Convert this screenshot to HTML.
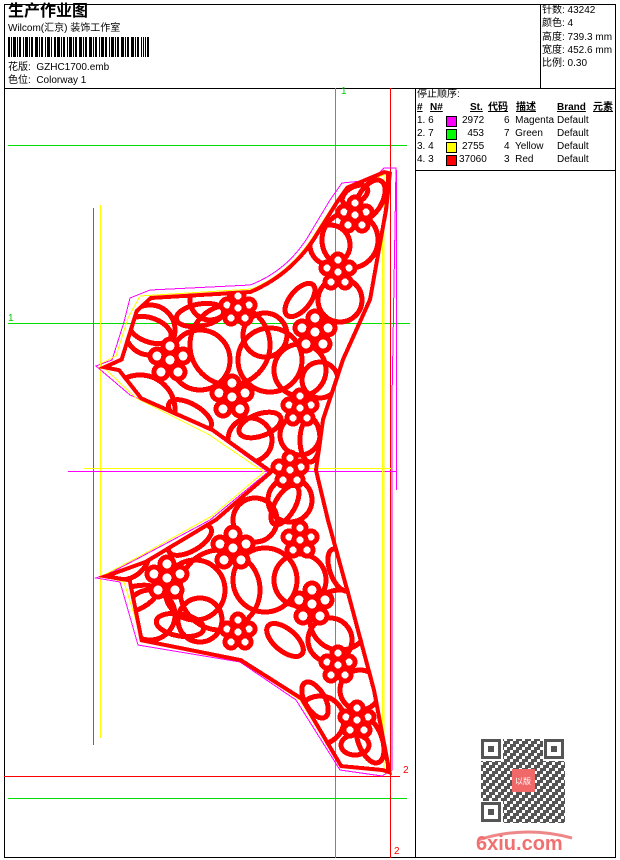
<!DOCTYPE html>
<html><head><meta charset="utf-8"><style>
body{margin:0;width:620px;height:860px;background:#fff;overflow:hidden;font-family:"Liberation Sans","Noto Sans CJK SC",sans-serif;font-size:10px;color:#000}
.t{position:absolute;white-space:nowrap;line-height:12px}
</style></head><body>
<svg width="620" height="860" style="position:absolute;left:0;top:0" shape-rendering="crispEdges">
<rect x="4.5" y="4.5" width="611" height="853" fill="none" stroke="#000"/>
<line x1="4" y1="88.5" x2="616" y2="88.5" stroke="#000"/>
<line x1="540.5" y1="4" x2="540.5" y2="88" stroke="#000"/>
<line x1="415.5" y1="88" x2="415.5" y2="858" stroke="#000"/>
<line x1="415" y1="170.5" x2="616" y2="170.5" stroke="#000"/>
<g fill="#000">
<rect x="8" y="37" width="2" height="20"/><rect x="11" y="37" width="1" height="20"/><rect x="13" y="37" width="3" height="20"/><rect x="17" y="37" width="1" height="20"/><rect x="19" y="37" width="2" height="20"/><rect x="23" y="37" width="1" height="20"/><rect x="25" y="37" width="3" height="20"/><rect x="29" y="37" width="1" height="20"/><rect x="31" y="37" width="2" height="20"/><rect x="35" y="37" width="3" height="20"/><rect x="39" y="37" width="1" height="20"/><rect x="41" y="37" width="2" height="20"/><rect x="45" y="37" width="1" height="20"/><rect x="47" y="37" width="3" height="20"/><rect x="51" y="37" width="1" height="20"/><rect x="54" y="37" width="2" height="20"/><rect x="57" y="37" width="3" height="20"/><rect x="61" y="37" width="1" height="20"/><rect x="63" y="37" width="2" height="20"/><rect x="67" y="37" width="1" height="20"/><rect x="69" y="37" width="3" height="20"/><rect x="73" y="37" width="1" height="20"/><rect x="75" y="37" width="2" height="20"/><rect x="79" y="37" width="3" height="20"/><rect x="83" y="37" width="1" height="20"/><rect x="85" y="37" width="2" height="20"/><rect x="89" y="37" width="3" height="20"/><rect x="93" y="37" width="1" height="20"/><rect x="95" y="37" width="2" height="20"/><rect x="99" y="37" width="1" height="20"/><rect x="101" y="37" width="3" height="20"/><rect x="105" y="37" width="2" height="20"/><rect x="109" y="37" width="1" height="20"/><rect x="111" y="37" width="3" height="20"/><rect x="115" y="37" width="1" height="20"/><rect x="117" y="37" width="2" height="20"/><rect x="121" y="37" width="3" height="20"/><rect x="125" y="37" width="1" height="20"/><rect x="127" y="37" width="2" height="20"/><rect x="131" y="37" width="3" height="20"/><rect x="135" y="37" width="1" height="20"/><rect x="137" y="37" width="2" height="20"/><rect x="141" y="37" width="1" height="20"/><rect x="143" y="37" width="1" height="20"/><rect x="145" y="37" width="1" height="20"/><rect x="147" y="37" width="2" height="20"/>
</g>
<line x1="8" y1="145.5" x2="407" y2="145.5" stroke="#00e000"/>
<line x1="8" y1="323.5" x2="410" y2="323.5" stroke="#00e000"/>
<line x1="335.5" y1="88" x2="335.5" y2="858" stroke="#00e000"/>
<line x1="8" y1="798.5" x2="407" y2="798.5" stroke="#00e000"/>
<line x1="390.5" y1="88" x2="390.5" y2="858" stroke="#f00"/>
<line x1="4" y1="776.5" x2="400" y2="776.5" stroke="#f00"/>
<line x1="93.5" y1="208" x2="93.5" y2="745" stroke="#f0f"/>
<line x1="100.5" y1="205" x2="100.5" y2="738" stroke="#ff0"/>
<line x1="68" y1="471.5" x2="397" y2="471.5" stroke="#f0f"/>
<line x1="84" y1="468.5" x2="392" y2="468.5" stroke="#ff0"/>
<line x1="382.5" y1="220" x2="382.5" y2="740" stroke="#ff0"/>
<line x1="396.5" y1="170" x2="396.5" y2="490" stroke="#f0f"/>
<path d="M96,366 L112,360 L124,322 L130,298 L150,290 L250,285 Q290,270 312,230 L330,200 L342,183 L372,180 L384,168 L396,168 L392,400 L392,770 L382,776 L340,770 L296,700 L240,662 L138,645 L120,582 L96,578 L112,572 L135,560 L210,520 L268,472 L210,430 L130,395 Z" fill="none" stroke="#f0f"/>
<path d="M100,364 L116,356 L128,318 L140,296 L252,289 Q292,272 316,232 L334,204 L346,188 L384,175 L384,770 L340,766 L300,700 L240,660 L142,640 L124,582 L102,576 L140,556 L212,516 L264,472 L208,434 L136,398 Z" fill="none" stroke="#ff0"/>
<defs><clipPath id="c"><path d="M98,368 L120,358 L135,310 L150,296 L250,290 Q292,272 316,232 L336,200 L346,186 L384,170 L392,172 L388,210 L372,300 L345,360 L325,420 L318,470 L330,520 L352,600 L376,690 L392,775 L382,772 L340,768 L300,700 L240,662 L140,642 L128,582 L98,577 L145,560 L215,518 L268,472 L212,432 L140,400 L118,372 Z"/></clipPath></defs>
<g clip-path="url(#c)" fill="none" stroke="#f00" stroke-width="5">
<path d="M98,368 L120,358 L135,310 L150,296 L250,290 Q292,272 316,232 L336,200 L346,186 L384,170 L392,172 L388,210 L372,300 L345,360 L325,420 L318,470 L330,520 L352,600 L376,690 L392,775 L382,772 L340,768 L300,700 L240,662 L140,642 L128,582 L98,577 L145,560 L215,518 L268,472 L212,432 L140,400 L118,372 Z" stroke-width="8"/>
<!-- big background shapes -->
<circle cx="200" cy="360" r="30"/><circle cx="270" cy="360" r="32"/><circle cx="265" cy="335" r="22"/>
<circle cx="265" cy="580" r="32"/><circle cx="195" cy="590" r="30"/>
<circle cx="330" cy="245" r="20"/><circle cx="340" cy="300" r="22"/>
<circle cx="150" cy="330" r="25"/><circle cx="140" cy="410" r="35"/><circle cx="210" cy="300" r="20"/>
<circle cx="300" cy="370" r="26"/><circle cx="250" cy="440" r="22"/><circle cx="320" cy="380" r="18"/>
<circle cx="255" cy="520" r="22"/><circle cx="300" cy="580" r="26"/><circle cx="150" cy="615" r="25"/>
<circle cx="330" cy="640" r="22"/><circle cx="320" cy="720" r="24"/><circle cx="360" cy="690" r="20"/>
<circle cx="200" cy="620" r="22"/><circle cx="220" cy="590" r="40"/><circle cx="230" cy="345" r="40"/>
<circle cx="290" cy="500" r="22"/><circle cx="300" cy="435" r="20"/><circle cx="350" cy="240" r="28"/>
<circle cx="340" cy="620" r="30"/><circle cx="120" cy="550" r="30"/>
<ellipse cx="355" cy="195" rx="14" ry="8" transform="rotate(-30 355 195)"/>
<ellipse cx="300" cy="300" rx="20" ry="10" transform="rotate(-50 300 300)"/>
<ellipse cx="200" cy="315" rx="24" ry="11" transform="rotate(-10 200 315)"/>
<ellipse cx="150" cy="330" rx="22" ry="12" transform="rotate(20 150 330)"/>
<ellipse cx="190" cy="415" rx="24" ry="11" transform="rotate(30 190 415)"/>
<ellipse cx="260" cy="425" rx="22" ry="11" transform="rotate(-20 260 425)"/>
<ellipse cx="310" cy="440" rx="10" ry="22"/>
<ellipse cx="285" cy="505" rx="10" ry="22" transform="rotate(30 285 505)"/>
<ellipse cx="190" cy="540" rx="24" ry="11" transform="rotate(-30 190 540)"/>
<ellipse cx="180" cy="625" rx="24" ry="11" transform="rotate(10 180 625)"/>
<ellipse cx="285" cy="640" rx="22" ry="11" transform="rotate(40 285 640)"/>
<ellipse cx="340" cy="570" rx="10" ry="22" transform="rotate(-20 340 570)"/>
<ellipse cx="355" cy="745" rx="14" ry="10"/>
<ellipse cx="315" cy="700" rx="10" ry="20" transform="rotate(-30 315 700)"/>
<ellipse cx="370" cy="200" rx="12" ry="22" transform="rotate(30 370 200)"/>
<ellipse cx="170" cy="450" rx="30" ry="14" transform="rotate(20 170 450)"/>
<ellipse cx="130" cy="600" rx="28" ry="12" transform="rotate(-20 130 600)"/>
<ellipse cx="370" cy="740" rx="12" ry="24" transform="rotate(-20 370 740)"/>
<!-- flowers with white fill -->
<g fill="#fff">
<circle cx="355" cy="203" r="6"/><circle cx="366" cy="212" r="6"/><circle cx="362" cy="225" r="6"/><circle cx="348" cy="225" r="6"/><circle cx="344" cy="212" r="6"/><circle cx="355" cy="215" r="6"/>
<circle cx="338" cy="260" r="6"/><circle cx="349" cy="268" r="6"/><circle cx="345" cy="282" r="6"/><circle cx="331" cy="282" r="6"/><circle cx="327" cy="268" r="6"/><circle cx="338" cy="272" r="6"/>
<circle cx="315" cy="318" r="7"/><circle cx="328" cy="328" r="7"/><circle cx="323" cy="344" r="7"/><circle cx="306" cy="344" r="7"/><circle cx="302" cy="328" r="7"/><circle cx="315" cy="332" r="7"/>
<circle cx="238" cy="296" r="6"/><circle cx="249" cy="305" r="6"/><circle cx="245" cy="318" r="6"/><circle cx="231" cy="318" r="6"/><circle cx="227" cy="305" r="6"/><circle cx="238" cy="308" r="6"/>
<circle cx="170" cy="346" r="7"/><circle cx="183" cy="356" r="7"/><circle cx="178" cy="372" r="7"/><circle cx="161" cy="372" r="7"/><circle cx="157" cy="356" r="7"/><circle cx="170" cy="360" r="7"/>
<circle cx="232" cy="383" r="7"/><circle cx="245" cy="393" r="7"/><circle cx="240" cy="409" r="7"/><circle cx="223" cy="409" r="7"/><circle cx="219" cy="393" r="7"/><circle cx="232" cy="397" r="7"/>
<circle cx="300" cy="396" r="6"/><circle cx="311" cy="405" r="6"/><circle cx="307" cy="418" r="6"/><circle cx="293" cy="418" r="6"/><circle cx="289" cy="405" r="6"/><circle cx="300" cy="408" r="6"/>
<circle cx="290" cy="458" r="6"/><circle cx="301" cy="467" r="6"/><circle cx="297" cy="480" r="6"/><circle cx="283" cy="480" r="6"/><circle cx="279" cy="467" r="6"/><circle cx="290" cy="470" r="6"/>
<circle cx="300" cy="528" r="6"/><circle cx="311" cy="537" r="6"/><circle cx="307" cy="550" r="6"/><circle cx="293" cy="550" r="6"/><circle cx="289" cy="537" r="6"/><circle cx="300" cy="540" r="6"/>
<circle cx="233" cy="534" r="7"/><circle cx="246" cy="544" r="7"/><circle cx="241" cy="560" r="7"/><circle cx="224" cy="560" r="7"/><circle cx="220" cy="544" r="7"/><circle cx="233" cy="548" r="7"/>
<circle cx="167" cy="564" r="7"/><circle cx="180" cy="574" r="7"/><circle cx="175" cy="590" r="7"/><circle cx="158" cy="590" r="7"/><circle cx="154" cy="574" r="7"/><circle cx="167" cy="578" r="7"/>
<circle cx="238" cy="620" r="6"/><circle cx="249" cy="629" r="6"/><circle cx="245" cy="642" r="6"/><circle cx="231" cy="642" r="6"/><circle cx="227" cy="629" r="6"/><circle cx="238" cy="632" r="6"/>
<circle cx="312" cy="590" r="7"/><circle cx="325" cy="600" r="7"/><circle cx="320" cy="616" r="7"/><circle cx="303" cy="616" r="7"/><circle cx="299" cy="600" r="7"/><circle cx="312" cy="604" r="7"/>
<circle cx="338" cy="653" r="6"/><circle cx="349" cy="662" r="6"/><circle cx="345" cy="675" r="6"/><circle cx="331" cy="675" r="6"/><circle cx="327" cy="662" r="6"/><circle cx="338" cy="665" r="6"/>
<circle cx="357" cy="708" r="6"/><circle cx="368" cy="717" r="6"/><circle cx="364" cy="730" r="6"/><circle cx="350" cy="730" r="6"/><circle cx="346" cy="717" r="6"/><circle cx="357" cy="720" r="6"/>
</g>
<line x1="388" y1="168" x2="388" y2="775" stroke-width="4"/>
</g>
</svg>
<div class="t" style="left:8px;top:3px;font-size:16px;font-weight:bold;line-height:18px">生产作业图</div>
<div class="t" style="left:8px;top:23px">Wilcom(汇京) 装饰工作室</div>
<div class="t" style="left:8px;top:62px">花版:&nbsp; GZHC1700.emb</div>
<div class="t" style="left:8px;top:75px">色位:&nbsp; Colorway 1</div>
<div class="t" style="left:542px;top:5px">针数: 43242</div>
<div class="t" style="left:542px;top:18px">颜色: 4</div>
<div class="t" style="left:542px;top:32px">高度: 739.3 mm</div>
<div class="t" style="left:542px;top:45px">宽度: 452.6 mm</div>
<div class="t" style="left:542px;top:58px">比例: 0.30</div>
<div class="t" style="left:417px;top:89px">停止顺序:</div>
<div class="t" style="left:417px;top:102px;font-weight:bold;text-decoration:underline">#</div>
<div class="t" style="left:430px;top:102px;font-weight:bold;text-decoration:underline">N#</div>
<div class="t" style="left:470px;top:102px;font-weight:bold;text-decoration:underline">St.</div>
<div class="t" style="left:488px;top:102px;font-weight:bold;text-decoration:underline">代码</div>
<div class="t" style="left:516px;top:102px;font-weight:bold;text-decoration:underline">描述</div>
<div class="t" style="left:557px;top:102px;font-weight:bold;text-decoration:underline">Brand</div>
<div class="t" style="left:593px;top:102px;font-weight:bold;text-decoration:underline">元素</div>
<div style="position:absolute;left:446px;top:116px;width:9px;height:9px;background:#f0f;border:1px solid #000"></div>
<div style="position:absolute;left:446px;top:129px;width:9px;height:9px;background:#0f0;border:1px solid #000"></div>
<div style="position:absolute;left:446px;top:142px;width:9px;height:9px;background:#ff0;border:1px solid #000"></div>
<div style="position:absolute;left:446px;top:155px;width:9px;height:9px;background:#f00;border:1px solid #000"></div>
<div class="t" style="left:417px;top:115px">1. 6</div><div class="t" style="left:462px;top:115px;width:22px;text-align:right">2972</div><div class="t" style="left:504px;top:115px">6&nbsp; Magenta</div><div class="t" style="left:557px;top:115px">Default</div>
<div class="t" style="left:417px;top:128px">2. 7</div><div class="t" style="left:462px;top:128px;width:22px;text-align:right">453</div><div class="t" style="left:504px;top:128px">7&nbsp; Green</div><div class="t" style="left:557px;top:128px">Default</div>
<div class="t" style="left:417px;top:141px">3. 4</div><div class="t" style="left:462px;top:141px;width:22px;text-align:right">2755</div><div class="t" style="left:504px;top:141px">4&nbsp; Yellow</div><div class="t" style="left:557px;top:141px">Default</div>
<div class="t" style="left:417px;top:154px">4. 3</div><div class="t" style="left:459px;top:154px;width:25px;text-align:right">37060</div><div class="t" style="left:504px;top:154px">3&nbsp; Red</div><div class="t" style="left:557px;top:154px">Default</div>
<div class="t" style="left:341px;top:86px;color:#0c0">1</div>
<div class="t" style="left:8px;top:313px;color:#0c0">1</div>
<div class="t" style="left:403px;top:765px;color:#f00">2</div>
<div class="t" style="left:394px;top:846px;color:#f00">2</div>
<svg width="620" height="860" style="position:absolute;left:0;top:0">
<defs><pattern id="q" width="9" height="9" patternUnits="userSpaceOnUse"><rect width="9" height="9" fill="#555"/><rect x="0" y="0" width="3" height="3" fill="#fff"/><rect x="6" y="3" width="3" height="3" fill="#fff"/><rect x="3" y="6" width="3" height="3" fill="#fff"/></pattern></defs>
<rect x="481" y="739" width="84" height="84" fill="url(#q)"/>
<g fill="#fff"><rect x="481" y="739" width="22" height="22"/><rect x="543" y="739" width="22" height="22"/><rect x="481" y="801" width="22" height="22"/></g>
<g fill="none" stroke="#555" stroke-width="3"><rect x="482.5" y="740.5" width="17" height="17"/><rect x="545.5" y="740.5" width="17" height="17"/><rect x="482.5" y="803.5" width="17" height="17"/></g>
<g fill="#555"><rect x="488" y="746" width="6" height="6"/><rect x="551" y="746" width="6" height="6"/><rect x="488" y="809" width="6" height="6"/></g>
<rect x="512" y="769" width="23" height="23" fill="#f06868"/>
<text x="523" y="784" font-size="8" fill="#fff" text-anchor="middle" font-family="Noto Sans CJK SC,sans-serif">以版</text>
<path d="M478,840 Q525,825 572,838" fill="none" stroke="#e88" stroke-width="3"/>
<text x="476" y="850" font-size="20" font-weight="bold" fill="#f07070" font-family="Liberation Sans,sans-serif">6xiu.com</text>
</svg>
</body></html>
